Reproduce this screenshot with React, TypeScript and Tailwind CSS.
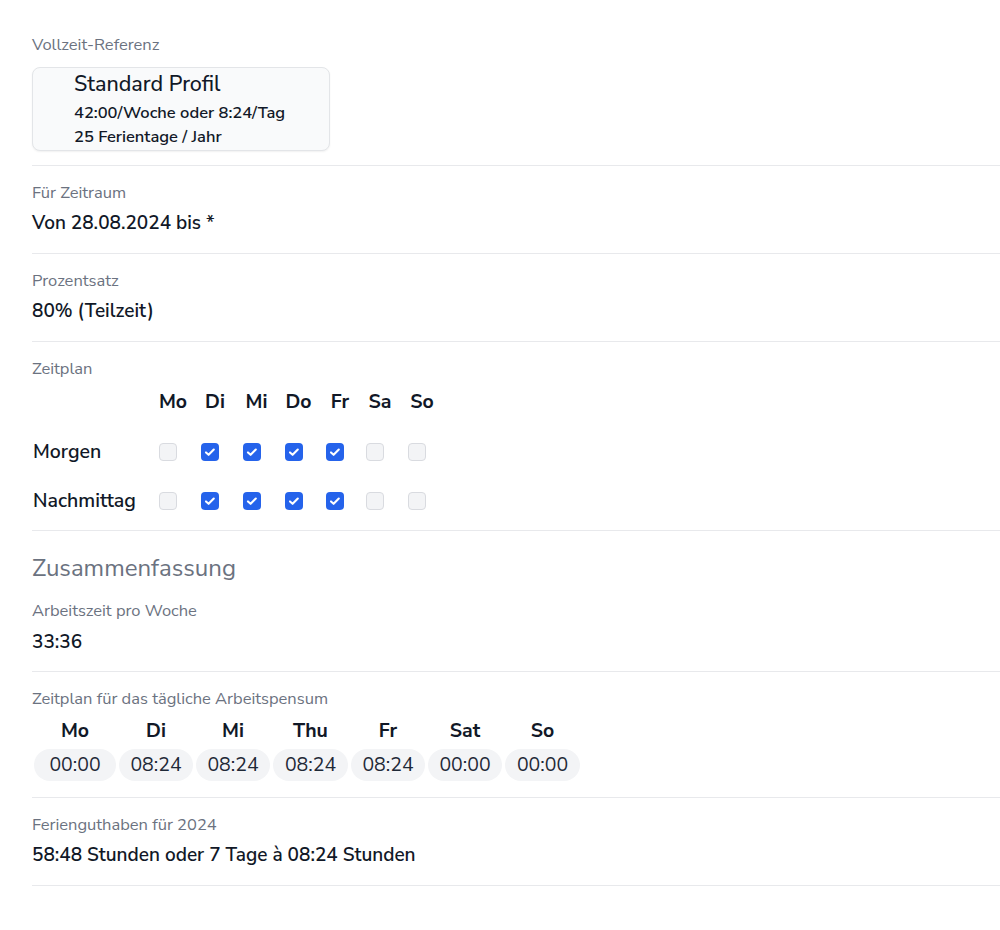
import React from "react";

const days = ["Mo", "Di", "Mi", "Do", "Fr", "Sa", "So"];
const morning = [false, true, true, true, true, false, false];
const afternoon = [false, true, true, true, true, false, false];

const daily = [
  { day: "Mo", time: "00:00", w: "w-[82px]" },
  { day: "Di", time: "08:24", w: "w-[74px]" },
  { day: "Mi", time: "08:24", w: "w-[74px]" },
  { day: "Thu", time: "08:24", w: "w-[75px]" },
  { day: "Fr", time: "08:24", w: "w-[74px]" },
  { day: "Sat", time: "00:00", w: "w-[74px]" },
  { day: "So", time: "00:00", w: "w-[75px]" },
];

function Check({ checked }: { checked: boolean }) {
  if (!checked) {
    return (
      <span className="mr-[10px] block h-[18px] w-[18px] rounded-[4px] border border-[#d9dbe0] bg-[#f3f4f6]" />
    );
  }
  return (
    <span className="mr-[10px] flex h-[18px] w-[18px] items-center justify-center rounded-[4px] bg-[#2563eb]">
      <svg width="18" height="18" viewBox="0 0 18 18" fill="none">
        <path
          d="M5 9.4l2.6 2.4 5.2-5.3"
          stroke="white"
          strokeWidth="2.1"
          strokeLinecap="round"
          strokeLinejoin="round"
        />
      </svg>
    </span>
  );
}

function Label({ children }: { children: React.ReactNode }) {
  return <div className="h-5 text-[16.5px] leading-5 text-[#6b7280]">{children}</div>;
}

function Value({ children }: { children: React.ReactNode }) {
  return (
    <div className="mt-[6px] h-7 text-[19px] font-semibold leading-7 text-[#111827]">
      {children}
    </div>
  );
}

function ScheduleRow({ label, values }: { label: string; values: boolean[] }) {
  return (
    <div className="grid h-7 grid-cols-[120px_42px_42px_41px_43px_40px_40px_44px] items-center">
      <div className="pl-px text-[19.5px] font-semibold text-[#111827]">{label}</div>
      {values.map((v, i) => (
        <div key={i} className="flex justify-center">
          <Check checked={v} />
        </div>
      ))}
    </div>
  );
}

export default function App() {
  return (
    <div
      className="min-h-[930px] w-full bg-white pl-8"
      style={{ fontFamily: '"Nunito Sans", Lato, "Noto Sans", sans-serif' }}
    >
      {/* Vollzeit-Referenz */}
      <section className="border-b border-[#e8e9ec] pt-[35px] pb-[14px]">
        <Label>Vollzeit-Referenz</Label>
        <div className="mt-3 w-[298px] rounded-lg border border-[#e3e5e8] bg-[#f9fafb] pt-[2px] pb-[1px] pl-[41px] shadow-[0_1px_2px_rgba(0,0,0,0.06)]">
          <div className="h-7 text-[21.5px] font-medium leading-7 text-[#111827]">Standard Profil</div>
          <div className="mt-[3px] text-[16.5px] font-semibold leading-6 text-[#111827]">
            42:00/Woche oder 8:24/Tag
          </div>
          <div className="text-[16.5px] font-semibold leading-6 text-[#111827]">25 Ferientage / Jahr</div>
        </div>
      </section>

      {/* Zeitraum */}
      <section className="border-b border-[#e8e9ec] pt-[17px] pb-[16px]">
        <Label>Für Zeitraum</Label>
        <Value>Von 28.08.2024 bis *</Value>
      </section>

      {/* Prozentsatz */}
      <section className="border-b border-[#e8e9ec] pt-[17px] pb-[16px]">
        <Label>Prozentsatz</Label>
        <Value>80% (Teilzeit)</Value>
      </section>

      {/* Zeitplan */}
      <section className="border-b border-[#e8e9ec] pt-[17px] pb-[16px]">
        <Label>Zeitplan</Label>
        <div className="mt-2 grid h-7 grid-cols-[120px_42px_42px_41px_43px_40px_40px_44px] items-center">
          <div />
          {days.map((d) => (
            <div key={d} className="text-center text-[19.5px] font-bold text-[#111827]">
              {d}
            </div>
          ))}
        </div>
        <div className="mt-[22px]">
          <ScheduleRow label="Morgen" values={morning} />
        </div>
        <div className="mt-[21px]">
          <ScheduleRow label="Nachmittag" values={afternoon} />
        </div>
      </section>

      {/* Zusammenfassung */}
      <section className="border-b border-[#e8e9ec] pt-[21px] pb-[15px]">
        <h2 className="h-8 text-[24px] leading-8 text-[#6b7280]">Zusammenfassung</h2>
        <div className="mt-[17px]">
          <Label>Arbeitszeit pro Woche</Label>
        </div>
        <div className="mt-[7px] h-7 text-[19px] font-semibold leading-7 text-[#111827]">33:36</div>
      </section>

      {/* Tägliches Arbeitspensum */}
      <section className="border-b border-[#e8e9ec] pt-[17px] pb-[16px]">
        <Label>Zeitplan für das tägliche Arbeitspensum</Label>
        <div className="mt-[10px] flex gap-[3px] pl-[2px]">
          {daily.map((d) => (
            <div key={d.day} className={`flex flex-col items-center ${d.w}`}>
              <div className="h-6 text-[19.5px] font-bold leading-6 text-[#111827]">{d.day}</div>
              <div className="mt-[6px] flex h-8 w-full items-center justify-center rounded-full bg-[#f3f4f6] text-[19.5px] text-[#1f2937]">
                {d.time}
              </div>
            </div>
          ))}
        </div>
      </section>

      {/* Ferienguthaben */}
      <section className="border-b border-[#e8e9ec] pt-[17px] pb-[16px]">
        <Label>Ferienguthaben für 2024</Label>
        <Value>58:48 Stunden oder 7 Tage à 08:24 Stunden</Value>
      </section>
    </div>
  );
}
